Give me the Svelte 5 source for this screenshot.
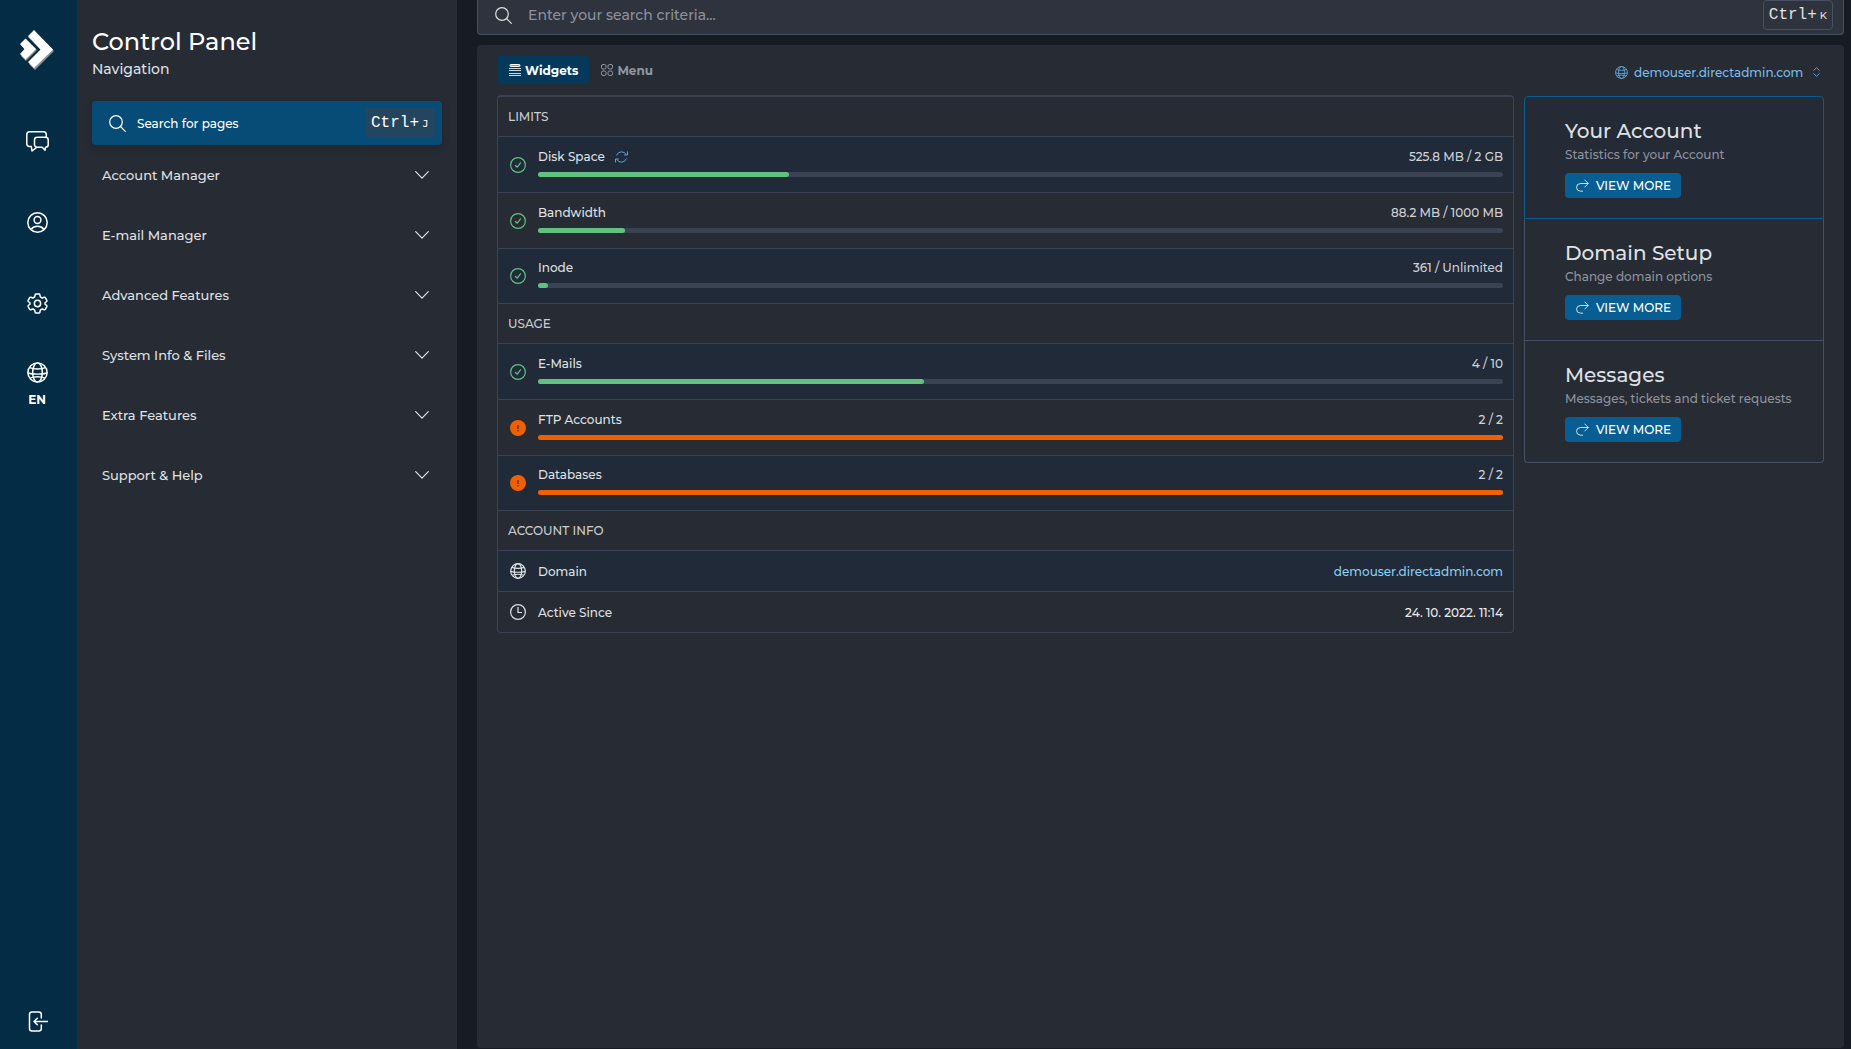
<script>
	let openMenu = $state('');
	let activeTab = $state('widgets');
	let query = $state('');

	const menu = [
		'Account Manager',
		'E-mail Manager',
		'Advanced Features',
		'System Info & Files',
		'Extra Features',
		'Support & Help'
	];

	const groups = [
		{
			title: 'Limits',
			rows: [
				{ label: 'Disk Space', value: '525.8 MB / 2 GB', percent: 26, refresh: true },
				{ label: 'Bandwidth', value: '88.2 MB / 1000 MB', percent: 9 },
				{ label: 'Inode', value: '361 / Unlimited', percent: 1 }
			]
		},
		{
			title: 'Usage',
			rows: [
				{ label: 'E-Mails', value: '4 / 10', percent: 40 },
				{ label: 'FTP Accounts', value: '2 / 2', percent: 100 },
				{ label: 'Databases', value: '2 / 2', percent: 100 }
			]
		}
	];

	const cards = [
		{ title: 'Your Account', text: 'Statistics for your Account', active: true },
		{ title: 'Domain Setup', text: 'Change domain options' },
		{ title: 'Messages', text: 'Messages, tickets and ticket requests' }
	];

	function toggleMenu(name) {
		openMenu = openMenu === name ? '' : name;
	}
</script>

{#snippet globe(size, stroke)}
	<svg width={size} height={size} viewBox="0 0 24 24" fill="none" stroke="currentColor" stroke-width={stroke} aria-hidden="true">
		<circle cx="12" cy="12" r="11" />
		<ellipse cx="12" cy="12" rx="5.5" ry="11" />
		<path d="M3 6.500C7.500 8.600 16.500 8.600 21 6.500M1 12.500c5 1.800 17 1.800 22 0M3.500 18.500c4.500-2.200 12.500-2.200 17 0" />
	</svg>
{/snippet}

{#snippet magnifier()}
	<svg width="17" height="17" viewBox="0 0 17 17" fill="none" stroke="currentColor" stroke-width="1.200" stroke-linecap="round" aria-hidden="true">
		<circle cx="7" cy="7" r="6.300" />
		<path d="M11.500 11.500 16.300 16.300" />
	</svg>
{/snippet}

<div class="app">
	<aside class="rail">
		<a href="/" class="logo" aria-label="DirectAdmin">
			<svg width="34" height="40" viewBox="0 0 34 40" aria-hidden="true">
				<g fill="#8f9091">
					<path d="M14 1 34 21 15 40 9 34 22 21 8 7Z" />
					<path d="M6 9 17 20 6 31 1 26 6 21 1 15Z" />
				</g>
				<g fill="#fff">
					<path d="M14 0 33 19.500 14 38 8 32 20.500 19.500 8 6Z" />
					<path d="M5.500 8.500 16 19 5.500 29.500 0 24 4.500 19 0 14Z" />
				</g>
			</svg>
		</a>
		<nav class="rail-nav" aria-label="Shortcuts">
			<a href="/tickets" aria-label="Messages">
				<svg width="23" height="21" viewBox="0 0 23 21" fill="none" stroke="currentColor" stroke-width="1.500" stroke-linejoin="round" aria-hidden="true">
					<path d="M20.300 6V3.500Q20.300 0.800 17.600 0.800H3.500Q0.800 0.800 0.800 3.500V12.800Q0.800 15.500 3.500 15.500H5.300L6 20 10.700 16.300H16.200L19 19.300 19.500 16.300Q22.200 16.200 22.200 13.800V9Q22.200 6.300 19.500 6.300H11.200Q8.500 6.300 8.500 9V13.800Q8.500 15.600 10.700 16.300" />
				</svg>
			</a>
			<a href="/profile" aria-label="Profile">
				<svg width="21" height="21" viewBox="0 0 21 21" fill="none" stroke="currentColor" stroke-width="1.500" aria-hidden="true">
					<circle cx="10.500" cy="10.500" r="9.700" />
					<circle cx="10.500" cy="8" r="3.400" />
					<path d="M4.200 17.300Q6.500 14.300 10.500 14.300T16.800 17.300" />
				</svg>
			</a>
			<a href="/settings" aria-label="Settings">
				<svg width="21" height="21" viewBox="0 0 24 24" fill="none" stroke="currentColor" stroke-width="1.700" stroke-linejoin="round" aria-hidden="true">
					<circle cx="12" cy="12" r="3.600" />
					<path d="M10.200 1.200H13.800Q14.500 1.200 14.700 2L15.200 4.500 17.200 5.700 19.700 4.900Q20.500 4.700 20.900 5.300L22.700 8.500Q23 9.200 22.500 9.700L20.600 11.200V12.800L22.500 14.300Q23 14.800 22.700 15.500L20.900 18.700Q20.500 19.300 19.700 19.100L17.200 18.300 15.200 19.500 14.700 22Q14.500 22.800 13.800 22.800H10.200Q9.500 22.800 9.300 22L8.800 19.500 6.800 18.300 4.300 19.100Q3.500 19.300 3.100 18.700L1.300 15.500Q1 14.800 1.500 14.300L3.400 12.800V11.200L1.500 9.700Q1 9.200 1.300 8.500L3.100 5.300Q3.500 4.700 4.300 4.900L6.800 5.700 8.800 4.500 9.300 2Q9.500 1.200 10.200 1.200Z" />
				</svg>
			</a>
			<button type="button" class="language">
				{@render globe(21, 1.7)}
				<span>EN</span>
			</button>
		</nav>
		<button type="button" class="logout" aria-label="Log out">
			<svg width="21" height="21" viewBox="0 0 21 21" fill="none" stroke="currentColor" stroke-width="1.500" stroke-linecap="round" stroke-linejoin="round" aria-hidden="true">
				<path d="M14.300 7V3.500Q14.300 1 11.800 1H5Q2.500 1 2.500 3.500V17.500Q2.500 20 5 20H11.800Q14.300 20 14.300 17.500V14" />
				<path d="M20.500 10.500H7M10.300 7.300 7 10.500 10.300 13.700" />
			</svg>
		</button>
	</aside>

	<aside class="sidebar">
		<header class="sidebar-head">
			<h1>Control Panel</h1>
			<p>Navigation</p>
		</header>
		<button type="button" class="page-search">
			{@render magnifier()}
			<span>Search for pages</span>
			<kbd class="keys">Ctrl+<small>J</small></kbd>
		</button>
		<nav aria-label="Navigation">
			{#each menu as item}
				<button type="button" class="menu-item" aria-expanded={openMenu === item} onclick={() => toggleMenu(item)}>
					{item}
					<svg width="14" height="8" viewBox="0 0 14 8" fill="none" stroke="currentColor" stroke-width="1.200" stroke-linecap="round" stroke-linejoin="round" aria-hidden="true">
						<path d="M0.700 0.700 7 7.200 13.300 0.700" />
					</svg>
				</button>
			{/each}
		</nav>
	</aside>

	<main class="main">
		<label class="search">
			{@render magnifier()}
			<input type="text" bind:value={query} placeholder="Enter your search criteria..." aria-label="Search" />
			<kbd class="keys outlined">Ctrl+<small>K</small></kbd>
		</label>

		<div class="content">
			<div class="toolbar">
				<div class="tabs">
					<button type="button" class="tab" class:active={activeTab === 'widgets'} onclick={() => (activeTab = 'widgets')}>
						<svg width="12" height="12" viewBox="0 0 12 12" fill="none" stroke="currentColor" aria-hidden="true">
							<rect x="1" y="0.500" width="10" height="2" rx="1" fill="currentColor" fill-opacity="0.5" />
							<path d="M0 4.500H12M0 6.500H12M0 9.500H12M0 11.500H12" stroke-opacity="0.8" />
						</svg>
						Widgets
					</button>
					<button type="button" class="tab" class:active={activeTab === 'menu'} onclick={() => (activeTab = 'menu')}>
						<svg width="12" height="12" viewBox="0 0 12 12" fill="none" stroke="currentColor" aria-hidden="true">
							<rect x="0.500" y="0.500" width="4.500" height="4.500" rx="1.500" />
							<rect x="7" y="0.500" width="4.500" height="4.500" rx="1.500" />
							<rect x="0.500" y="7" width="4.500" height="4.500" rx="1.500" />
							<rect x="7" y="7" width="4.500" height="4.500" rx="1.500" />
						</svg>
						Menu
					</button>
				</div>
				<label class="domain">
					{@render globe(13, 1.8)}
					<select aria-label="Domain">
						<option>demouser.directadmin.com</option>
					</select>
					<svg width="7" height="10" viewBox="0 0 7 10" fill="none" stroke="currentColor" aria-hidden="true">
						<path d="M0.500 3.500 3.500 0.700 6.500 3.500M0.500 6.500 3.500 9.300 6.500 6.500" />
					</svg>
				</label>
			</div>

			<div class="columns">
				<div class="stats">
					{#each groups as group}
						<section>
							<h2>{group.title}</h2>
							{#each group.rows as row}
								<div class="row meter">
									{#if row.percent < 100}
										<svg class="ok" width="16" height="16" viewBox="0 0 16 16" fill="none" stroke="currentColor" stroke-width="1.200" stroke-linecap="round" stroke-linejoin="round" aria-hidden="true">
											<circle cx="8" cy="8" r="7.400" />
											<path d="M5.400 8.500 7.200 10.200 10.500 5.800" />
										</svg>
									{:else}
										<svg class="full" width="16" height="16" viewBox="0 0 16 16" aria-hidden="true">
											<circle cx="8" cy="8" r="8" fill="currentColor" />
											<path d="M8 5V9M8 10V11.500" stroke="#6b3a20" stroke-width="1.600" />
										</svg>
									{/if}
									<div class="meter-body">
										<div class="meter-text">
											<span class="label">{row.label}</span>
											{#if row.refresh}
												<button type="button" class="refresh" aria-label="Refresh disk space">
													<svg width="13" height="12" viewBox="0 0 13 12" fill="none" stroke="currentColor" aria-hidden="true">
														<path d="M1.500 4.500Q3 0.800 6.500 0.800T11.300 3.800M12.500 0.500V4H9.200M11.500 7.500Q10 11.200 6.500 11.200T1.700 8.200M0.500 11.500V8H3.800" />
													</svg>
												</button>
											{/if}
											<span class="value">{row.value}</span>
										</div>
										<div class="track" role="progressbar" aria-label={row.label} aria-valuenow={row.percent}>
											<div class="bar" class:over={row.percent >= 100} style="width: {row.percent}%"></div>
										</div>
									</div>
								</div>
							{/each}
						</section>
					{/each}
					<section>
						<h2>Account Info</h2>
						<div class="row">
							{@render globe(16, 1.8)}
							<span class="label">Domain</span>
							<a href="/domain" class="value">demouser.directadmin.com</a>
						</div>
						<div class="row">
							<svg width="16" height="16" viewBox="0 0 16 16" fill="none" stroke="currentColor" stroke-width="1.200" aria-hidden="true">
								<circle cx="8" cy="8" r="7.400" />
								<path d="M8 3V8.500H12" />
							</svg>
							<span class="label">Active Since</span>
							<span class="value bright">24. 10. 2022. 11:14</span>
						</div>
					</section>
				</div>

				<div class="cards">
					{#each cards as card}
						<article class="card" class:active={card.active}>
							<h3>{card.title}</h3>
							<p>{card.text}</p>
							<a href="/more" class="more">
								<svg width="13" height="13" viewBox="0 0 13 13" fill="none" stroke="currentColor" stroke-opacity="0.8" aria-hidden="true">
									<path d="M12.300 4.500H4.500Q0.500 4.700 0.500 8.300T4.500 12.200H7M8.500 0.700 12.300 4.500 8.500 8.300" />
								</svg>
								View more
							</a>
						</article>
					{/each}
				</div>
			</div>
		</div>
	</main>
</div>

<style>
	:global(body) {
		background: #171b24;
		color: #dfe1e4;
		font-family: Montserrat, Inter, sans-serif;
		font-size: 12px;
		font-weight: 500;
	}

	button,
	input,
	select {
		background: none;
		border: 0;
		color: inherit;
		font: inherit;
		margin: 0;
		padding: 0;
	}

	button {
		cursor: pointer;
	}

	a {
		color: inherit;
		text-decoration: none;
	}

	h1,
	h2,
	h3,
	p {
		font-weight: 500;
		margin: 0;
	}

	svg {
		display: block;
		flex-shrink: 0;
	}

	.app {
		display: flex;
		min-height: 100vh;
	}

	/* Icon rail */
	.rail {
		align-items: center;
		background: #042c44;
		box-sizing: border-box;
		color: #fff;
		display: flex;
		flex-direction: column;
		flex-shrink: 0;
		padding: 30px 3px 0 0;
		width: 77px;
	}

	.logo {
		margin-bottom: 31px;
	}

	.rail-nav {
		display: flex;
		flex-direction: column;
	}

	.rail-nav > *,
	.logout {
		align-items: center;
		display: flex;
		flex-direction: column;
		gap: 9px;
		height: 81px;
		justify-content: center;
		width: 74px;
	}

	.language {
		font-weight: 700;
		line-height: 16px;
	}

	.logout {
		height: 55px;
		margin-top: auto;
	}

	/* Navigation */
	.sidebar {
		background: #272b34;
		box-sizing: border-box;
		flex-shrink: 0;
		padding: 24px 15px;
		width: 380px;
	}

	.sidebar-head {
		height: 77px;
	}

	h1 {
		color: #fff;
		font-size: 24px;
		line-height: 36px;
	}

	.sidebar-head p {
		font-size: 14px;
		line-height: 18px;
	}

	.page-search {
		align-items: center;
		background: #074c76;
		border-radius: 4px;
		box-shadow: 0 2px 8px rgba(0, 0, 0, 0.2);
		box-sizing: border-box;
		color: #fff;
		display: flex;
		gap: 11px;
		height: 44px;
		padding: 0 7px 0 17px;
		width: 100%;
	}

	.page-search span {
		margin-right: auto;
	}

	.keys {
		align-items: center;
		background: #24455f;
		border-radius: 4px;
		box-sizing: border-box;
		display: flex;
		font-family: "Liberation Mono", monospace;
		font-size: 16px;
		font-weight: 400;
		gap: 3px;
		height: 30px;
		padding: 0 6px;
	}

	.keys small {
		font-family: Montserrat, Inter, sans-serif;
		font-size: 10px;
		font-weight: 500;
		min-width: 7px;
		text-align: center;
	}

	.keys.outlined {
		background: none;
		border: 1px solid #475063;
		padding: 0 5px;
	}

	.menu-item {
		align-items: center;
		display: flex;
		font-size: 13px;
		height: 60px;
		justify-content: space-between;
		padding: 0 13px 0 10px;
		width: 100%;
	}

	/* Main area */
	.main {
		display: flex;
		flex: 1;
		flex-direction: column;
		gap: 10px;
		min-width: 0;
		padding: 0 7px 1px 20px;
	}

	.search {
		align-items: center;
		background: #2f333d;
		border: 1px solid #475063;
		border-radius: 0 0 4px 4px;
		border-top: 0;
		box-sizing: border-box;
		display: flex;
		gap: 16px;
		height: 35px;
		padding: 0 10px 4px 17px;
	}

	.search input {
		flex: 1;
		font-size: 14px;
		outline: none;
	}

	.search input::placeholder {
		color: #8d919c;
		opacity: 1;
	}

	.content {
		background: #272b34;
		border-radius: 4px;
		flex: 1;
		padding: 11px 20px;
	}

	.toolbar {
		display: flex;
		justify-content: space-between;
		margin-bottom: 11px;
	}

	.tabs {
		display: flex;
	}

	.tab {
		align-items: center;
		border-radius: 4px;
		color: #9296a1;
		display: flex;
		font-weight: 700;
		gap: 4px;
		height: 28px;
		padding: 0 11px 0 12px;
	}

	.tab.active {
		background: #04395b;
		color: #fff;
	}

	.domain {
		align-items: center;
		color: #55a5d8;
		display: flex;
		gap: 6px;
		margin-right: 4px;
		padding-top: 4px;
	}

	.domain select {
		appearance: none;
		color: #78bdeb;
		margin-right: 3px;
	}

	.columns {
		align-items: flex-start;
		display: flex;
		gap: 10px;
	}

	.stats {
		border: 1px solid #3a4254;
		border-radius: 4px;
		border-top-width: 2px;
		flex: 1;
	}

	h2 {
		border-bottom: 1px solid #3a4254;
		box-sizing: border-box;
		color: #cbcdd1;
		font-size: 12px;
		height: 40px;
		line-height: 39px;
		padding: 0 10px;
		text-transform: uppercase;
	}

	.row {
		align-items: center;
		border-bottom: 1px solid #3a4254;
		box-sizing: border-box;
		display: flex;
		gap: 12px;
		height: 41px;
		padding: 0 10px 0 12px;
	}

	.row:nth-child(even) {
		background: #202a38;
	}

	section:last-child .row:last-child {
		border-bottom: 0;
		height: 40px;
	}

	.meter {
		height: 56px;
	}

	.meter:last-child {
		height: 55px;
	}

	.ok {
		color: #62c080;
	}

	.full {
		color: #ef6000;
	}

	.meter-body {
		flex: 1;
		padding-bottom: 6px;
	}

	.meter-text {
		align-items: center;
		display: flex;
		gap: 10px;
		line-height: 20px;
		margin-bottom: 5px;
	}

	.refresh {
		color: #55a5d8;
	}

	.value {
		color: #cfd1d5;
		margin-left: auto;
	}

	a.value {
		color: #8bcdf2;
	}

	.bright {
		color: #e8e9eb;
	}

	.track {
		background: #3a4254;
		border-radius: 3px;
		height: 5px;
	}

	.bar {
		background: #62c080;
		border-radius: 3px;
		height: 100%;
	}

	.bar.over {
		background: #ef6000;
	}

	/* Side cards */
	.cards {
		margin-top: 1px;
		width: 300px;
	}

	.card {
		border: 1px solid #475063;
		border-top: 0;
		box-sizing: border-box;
		height: 122px;
		padding: 22px 20px 0 40px;
	}

	.card.active {
		background: #242a36;
		border: 1px solid #085d93;
		border-radius: 4px 4px 0 0;
		height: 123px;
	}

	.card:last-child {
		border-radius: 0 0 4px 4px;
	}

	h3 {
		font-size: 20px;
		line-height: 24px;
	}

	.card p {
		color: #8f939d;
		line-height: 20px;
		margin: 2px 0 8px;
		white-space: nowrap;
	}

	.more {
		align-items: center;
		background: #085d93;
		border-radius: 4px;
		color: #fff;
		display: inline-flex;
		gap: 7px;
		height: 25px;
		padding: 0 10px 0 11px;
		text-transform: uppercase;
	}
</style>
